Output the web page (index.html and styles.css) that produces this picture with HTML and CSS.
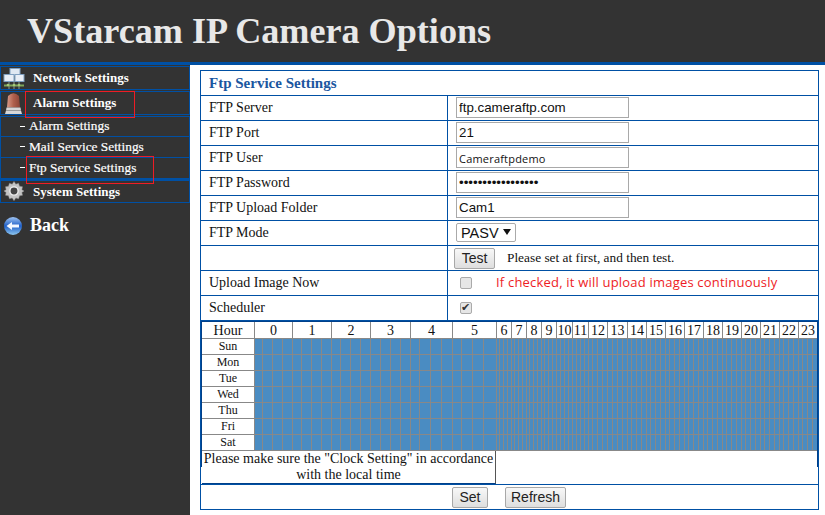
FILE: index.html
```html
<!DOCTYPE html>
<html lang="en">
<head>
<meta charset="utf-8">
<title>VStarcam IP Camera Options</title>
<link rel="stylesheet" href="styles.css">
</head>
<body>
<header class="topbar"><h1>VStarcam IP Camera Options</h1></header>
<div class="layout">
  <nav class="sidebar">
    <div class="nav-item">
      <svg class="ico" viewBox="0 0 24 24" width="24" height="24">
        <path d="M12 9v6M7 15v7M17 15v7M12 15v7" stroke="#8a9a8a" fill="none"/>
        <rect x="8" y="1.500" width="10" height="7" fill="#dfe8f2" stroke="#7f9fc0"/>
        <rect x="2" y="7.500" width="10" height="7" fill="#e8eef6" stroke="#7f9fc0"/>
        <rect x="13" y="7.500" width="9" height="7" fill="#e8eef6" stroke="#7f9fc0"/>
        <path d="M2 18.500h20" stroke="#7fa65a" stroke-width="2"/>
        <circle cx="6" cy="18" r="1.300" fill="#a5c87a"/><circle cx="12" cy="18" r="1.300" fill="#a5c87a"/><circle cx="17" cy="18" r="1.300" fill="#a5c87a"/>
      </svg>
      <span>Network Settings</span>
    </div>
    <div class="nav-item">
      <svg class="ico" viewBox="0 0 24 24" width="24" height="24">
        <defs><linearGradient id="dome" x1="0" y1="0" x2="1" y2="0"><stop offset="0" stop-color="#d89a88"/><stop offset=".5" stop-color="#b0604c"/><stop offset="1" stop-color="#8c4436"/></linearGradient></defs>
        <path d="M5 15.500 L6 4 Q11.500 -1.500 17 4 L18 15.500Z" fill="url(#dome)"/>
        <path d="M4.500 15.500h14l.5 3 1 3.500H3l1-3.500z" fill="#d6d6d6"/>
        <path d="M4 18.500h15" stroke="#9a9a9a"/>
      </svg>
      <span>Alarm Settings</span>
    </div>
    <div class="sub-list">
      <div class="sub-item">Alarm Settings</div>
      <div class="sub-item">Mail Service Settings</div>
      <div class="sub-item">Ftp Service Settings</div>
    </div>
    <div class="nav-item nav-system">
      <svg class="ico ico-gear" viewBox="0 0 24 24" width="22" height="22">
        <path d="M12 1.500l2 3 3-1 1 3.200 3.300.6-.7 3.200L23 12l-2.400 1.500.7 3.200-3.300.6-1 3.200-3-1-2 3-2-3-3 1-1-3.200-3.300-.6.7-3.200L1 12l2.400-1.500-.7-3.200L6 6.700l1-3.200 3 1z" fill="#c4c4c4" stroke="#8a8a8a" stroke-width=".5"/>
        <circle cx="12" cy="12" r="4.500" fill="#444" stroke="#eee" stroke-width="1.500"/>
      </svg>
      <span>System Settings</span>
    </div>
    <div class="back">
      <svg class="back-ico" viewBox="0 0 20 20" width="20" height="20">
        <defs><linearGradient id="bk" x1="0" y1="0" x2="0" y2="1"><stop offset="0" stop-color="#9fc4f2"/><stop offset=".5" stop-color="#1f5fc8"/><stop offset="1" stop-color="#8fc8f0"/></linearGradient></defs>
        <circle cx="10" cy="10" r="9" fill="url(#bk)"/>
        <path d="M3.500 10 L9 6v2.500h7v3H9V14z" fill="#f4f8ff"/>
      </svg>
      <span>Back</span>
    </div>
    <div class="mark mark-alarm"></div>
    <div class="mark mark-ftp"></div>
  </nav>
  <main class="content">
    <table class="form">
      <colgroup><col class="col-label"><col></colgroup>
      <tr><th colspan="2" class="title">Ftp Service Settings</th></tr>
      <tr><td>FTP Server</td><td class="val"><input class="txt" type="text" value="ftp.cameraftp.com"></td></tr>
      <tr><td>FTP Port</td><td class="val"><input class="txt" type="text" value="21"></td></tr>
      <tr><td>FTP User</td><td class="val"><input class="txt txt-small" type="text" value="Cameraftpdemo"></td></tr>
      <tr><td>FTP Password</td><td class="val"><input class="txt" type="password" value="cameraftpdemo1234"></td></tr>
      <tr><td>FTP Upload Folder</td><td class="val"><input class="txt" type="text" value="Cam1"></td></tr>
      <tr><td>FTP Mode</td><td class="val"><span class="select-wrap"><select class="mode"><option>PASV</option><option>PORT</option></select></span></td></tr>
      <tr><td></td><td class="val val-test"><div class="test-line"><button class="btn btn-test" type="button">Test</button><span class="hint">Please set at first, and then test.</span></div></td></tr>
      <tr><td>Upload Image Now</td><td class="val val-check"><input class="chk" type="checkbox"><span class="warn">If checked, it will upload images continuously</span></td></tr>
      <tr><td>Scheduler</td><td class="val val-check"><input class="chk" type="checkbox" checked></td></tr>
      <tr><td colspan="2" class="sched-cell">
        <div class="sched" id="sched">
          <div class="h-label">Hour</div>
          <div class="h">0</div><div class="h">1</div><div class="h">2</div><div class="h">3</div><div class="h">4</div><div class="h">5</div>
          <div class="h">6</div><div class="h">7</div><div class="h">8</div><div class="h">9</div><div class="h">10</div><div class="h">11</div>
          <div class="h">12</div><div class="h">13</div><div class="h">14</div><div class="h">15</div><div class="h">16</div><div class="h">17</div>
          <div class="h">18</div><div class="h">19</div><div class="h">20</div><div class="h">21</div><div class="h">22</div><div class="h">23</div>
          <div class="note" id="note">Please make sure the "Clock Setting" in accordance with the local time</div>
        </div>
      </td></tr>
      <tr><td colspan="2" class="actions"><button class="btn btn-set" type="button">Set</button><button class="btn btn-refresh" type="button">Refresh</button></td></tr>
    </table>
  </main>
</div>
<script src="schedule.js"></script>
</body>
</html>
```
FILE: styles.css
```css
* { box-sizing: border-box; }
html, body { margin: 0; height: 100%; background: #fff; overflow: hidden; }
body { font-family: "Liberation Serif", "Times New Roman", serif; font-size: 14px; color: #111; }

.topbar { height: 65px; background: #333; border-bottom: 3px solid #0050a4; padding: 7px 0 0 27px; }
.topbar h1 { margin: 0; font-size: 36.150px; line-height: 48px; font-weight: bold; color: #e8e8e8; white-space: nowrap; }

.layout { display: flex; height: 450px; }
.sidebar { position: relative; width: 190px; flex: none; background: #333; padding-top: 1px; color: #fff; font-weight: bold; }

.nav-item { display: flex; align-items: center; height: 24px; margin-bottom: 1px; border: 1px solid #0050a4; font-size: 13px; padding-left: 32px; position: relative; }
.nav-item .ico { position: absolute; left: 1px; top: 0; }
.nav-system { height: 22px; border-top: 0; margin-bottom: 0; }
.nav-item .ico-gear { left: 2px; top: -1px; }

.sub-list { border-left: 1px solid #0050a4; border-right: 1px solid #0050a4; border-top: 1px solid #0050a4; border-bottom: 3px solid #0050a4; }
.sub-item { height: 21px; line-height: 17px; padding: 1px 0 0 28px; font-size: 13.330px; font-weight: normal; -webkit-text-stroke: .2px #fff; border-bottom: 1px solid #0050a4; position: relative; white-space: nowrap; }
.sub-item:first-child { height: 20px; padding-top: 0; }
.sub-item:last-child { height: 20px; border-bottom: 0; }
.sub-item::before { content: ""; position: absolute; left: 19px; top: 9px; width: 5px; height: 1px; background: #fff; }

.back { display: flex; align-items: center; gap: 7px; padding: 12px 0 0 3px; font-size: 18px; }

.mark { position: absolute; border: 1px solid #ee1c25; }
.mark-alarm { left: 25px; top: 26px; width: 110px; height: 27px; }
.mark-ftp { left: 26px; top: 91px; width: 128px; height: 28px; }

.content { flex: 1; padding: 5px 6px 0 10px; }
.form { width: 619px; border-collapse: collapse; table-layout: fixed; }
.form td, .form th { border: 1px solid #0050a4; height: 25px; padding: 0 0 0 8px; font-weight: normal; text-align: left; white-space: nowrap; }
.col-label { width: 247px; }
.form .title { font-size: 15px; font-weight: bold; color: #1a56a0; }
.form .val { padding-left: 8px; }

.txt { display: block; width: 173px; height: 21px; margin-bottom: 1px; padding: 0 2px; border: 1px solid #a9a9a9; font: 13.330px "Liberation Sans", Arial, sans-serif; color: #111; background: #fff; }
.txt-small { padding-top: 2px; font: 11px "Open Sans", Tahoma, sans-serif; letter-spacing: .2px; }

.select-wrap { display: block; position: relative; width: 60px; height: 19px; margin-bottom: 1px; }
.select-wrap::after { content: ""; position: absolute; right: 5px; top: 6px; border: 4px solid transparent; border-top: 6px solid #111; border-bottom: 0; }
.mode { appearance: none; display: block; width: 60px; height: 19px; padding: 0 0 0 4px; border: 1px solid #aaa; border-radius: 2px; background: #fff; color: #111; font: 14.500px "Liberation Sans", Arial, sans-serif; }

.btn { height: 21px; padding: 0; border: 1px solid #a8a8a8; border-radius: 2px; background: linear-gradient(#f8f8f8, #dedede); color: #222; font: 14px "Liberation Sans", Arial, sans-serif; }
.form .val-test { padding-left: 6px; }
.test-line { display: flex; align-items: center; }
.btn-test { width: 41px; flex: none; }
.hint { margin-left: 12px; font-size: 13.330px; }

.val-check { position: relative; }
.chk { appearance: none; display: block; width: 12px; height: 12px; margin: 0 0 1px 4px; border: 1px solid #aaa; border-radius: 2px; background: #e6e6e6; position: relative; }
.chk:checked::after { content: "\2714"; position: absolute; left: 0; top: -2px; font: 11px/13px "DejaVu Sans", sans-serif; color: #333; }
.warn { position: absolute; left: 48px; top: 2px; font: 13px "Open Sans", sans-serif; color: #ee1c25; letter-spacing: .2px; }

.form .sched-cell { padding: 0; height: 164px; vertical-align: top; }
.sched {
  display: grid;
  grid-template-columns: 52px
    8px 10px 10px 10px 9px 10px 10px 10px 9px 10px 10px 10px 10px 10px 10px 10px
    9px 11px 11px 11px 9px 11px 11px 13px
    3px 4px 4px 4px 3px 4px 4px 4px 3px 4px 4px 4px 3px 4px 4px 4px
    4px 4px 4px 4px 4px 4px 4px 4px
    4px 5px 5px 5px 5px 5px 5px 5px
    4px 5px 5px 5px 4px 5px 5px 5px 4px 5px 5px 5px 4px 5px 5px 5px 4px 5px 5px 5px
    4px 5px 5px 5px 4px 5px 5px 5px 4px 5px 5px 5px 4px 5px 5px 5px 4px 5px 5px 5px;
  grid-auto-rows: 16px;
  grid-template-rows: 17px;
  width: 617px;
  border: 1px solid #00408a;
  border-width: 1px 1px 0 1px;
  background: #fff;
}
.h-label, .h { height: 17px; border-bottom: 1px solid #888; text-align: center; font-size: 14px; line-height: 17px; background: #fff; }
.h { grid-column: span 4; border-left: 1px solid #888; }
.day { border-bottom: 1px solid #888; text-align: center; font-size: 12px; line-height: 14px; background: #fff; }
.slot { border-bottom: 1px solid #888; border-left: 1px solid #888; background: #4a8cc2; }
.note { grid-column: 1 / 26; height: 33px; border-right: 1px solid #555; border-bottom: 1px solid #00408a; font-size: 14px; line-height: 16px; text-align: center; white-space: normal; padding: 0; }

.form .actions { padding: 0 0 0 251px; }
.actions .btn { display: inline-block; vertical-align: middle; }
.btn-set { width: 36px; }
.btn-refresh { width: 61px; margin-left: 17px; }
```
FILE: schedule.js
```js
// Fill the weekly schedule: one label and 96 quarter-hour slots per day.
var sched = document.getElementById('sched');
var note = document.getElementById('note');
['Sun', 'Mon', 'Tue', 'Wed', 'Thu', 'Fri', 'Sat'].forEach(function (name) {
  var day = document.createElement('div');
  day.className = 'day';
  day.textContent = name;
  sched.insertBefore(day, note);
  for (var i = 0; i < 96; i++) {
    var slot = document.createElement('div');
    slot.className = 'slot';
    sched.insertBefore(slot, note);
  }
});
```
